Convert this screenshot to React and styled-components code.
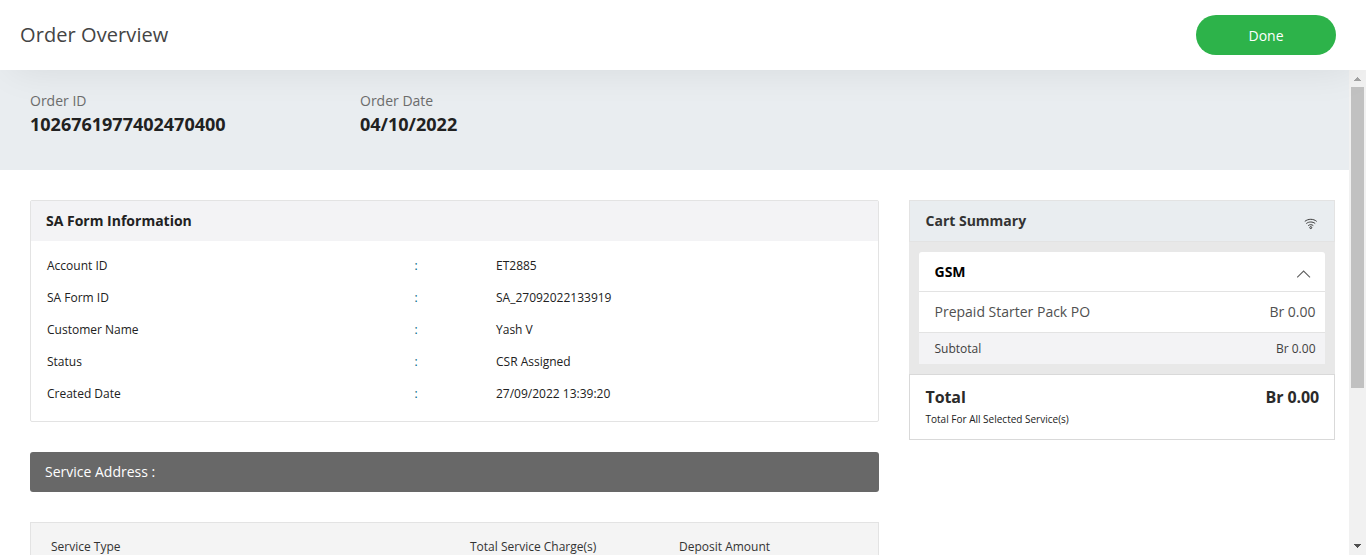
import React from "react";
import styled, { createGlobalStyle } from "styled-components";

const GlobalStyle = createGlobalStyle`
  *, *::before, *::after { box-sizing: border-box; }
  body {
    margin: 0;
    background: #fff;
    color: #212121;
    font-family: "Open Sans", "Noto Sans", sans-serif;
    font-size: 14px;
    overflow: hidden;
  }
`;

const Page = styled.div`
  display: flex;
  flex-direction: column;
  height: 555px;
  overflow: hidden;
`;

const Header = styled.header`
  position: relative;
  z-index: 1;
  flex: none;
  display: flex;
  align-items: center;
  justify-content: space-between;
  height: 70px;
  padding: 0 30px 0 20px;
  background: #fff;
  box-shadow: 0 10px 40px -12px rgba(0, 0, 0, 0.09);
`;

const Title = styled.h1`
  margin: 0;
  font-size: 20px;
  font-weight: 400;
  line-height: 30px;
  letter-spacing: 0.08px;
  color: #444;
`;

const DoneButton = styled.button`
  width: 140px;
  height: 40px;
  padding: 2px 0 0;
  border: 0;
  border-radius: 20px;
  background: #2db34a;
  color: #fff;
  font: 400 14px/20px "Open Sans", sans-serif;
`;

const Viewport = styled.div`
  flex: 1;
  min-height: 0;
  display: flex;
`;

const Content = styled.main`
  flex: 1;
  min-width: 0;
  overflow: hidden;
`;

const OrderBand = styled.section`
  display: flex;
  height: 100px;
  padding: 21px 30px 0;
  background: #e9edf0;
`;

const OrderFact = styled.div`
  width: 330px;
`;

const FactLabel = styled.div`
  font-size: 14px;
  line-height: 20px;
  color: #6c6c6c;
`;

const FactValue = styled.div`
  font-size: 18px;
  font-weight: 700;
  line-height: 26px;
  color: #212121;
`;

const Columns = styled.div`
  display: flex;
  align-items: flex-start;
  gap: 30px;
  padding: 30px 14px 0 30px;
`;

const MainColumn = styled.div`
  flex: none;
  width: 849px;
  display: flex;
  flex-direction: column;
  gap: 30px;
`;

const Panel = styled.section`
  height: 222px;
  border: 1px solid #e3e3e3;
  border-radius: 2px;
`;

const PanelHeading = styled.h2`
  margin: 0;
  height: 40px;
  padding: 0 15px;
  background: #f3f3f5;
  font-size: 14px;
  font-weight: 700;
  line-height: 40px;
`;

const Details = styled.div`
  padding: 9px 16px;
`;

const DetailRow = styled.div`
  display: grid;
  grid-template-columns: 367px 82px 1fr;
  height: 32px;
  font-size: 12px;
  line-height: 32px;
`;

const Colon = styled.span`
  padding-left: 0.5px;
  color: #00647f;
`;

const AddressBar = styled.div`
  height: 40px;
  padding: 0 15px;
  border-radius: 3px;
  background: #686868;
  color: #fff;
  font-size: 14px;
  line-height: 40px;
`;

const ServiceTable = styled.div`
  display: grid;
  grid-template-columns: 419px 209px 1fr;
  height: 60px;
  padding: 0 20px;
  border: 1px solid #e3e3e3;
  background: #f4f4f4;
  color: #333;
  font-size: 12px;
  line-height: 48px;
`;

const Cart = styled.aside`
  flex: none;
  width: 426px;
  background: #e8e8e8;
`;

const CartHeading = styled.div`
  display: flex;
  justify-content: space-between;
  height: 42px;
  padding: 0 16px 0 15.5px;
  border: 1px solid #e3e3e3;
  background: #e9edf0;
  font-size: 14px;
  font-weight: 700;
  line-height: 40px;
  color: #333;
`;

const CartGroup = styled.div`
  margin: 10px 10px 0;
  height: 112px;
  border-radius: 3px 3px 0 0;
  overflow: hidden;
  background: #fff;
`;

const CartLine = styled.div`
  display: flex;
  justify-content: space-between;
  height: ${(p) => p.$height}px;
  padding: 0 9.5px 0 15.5px;
  line-height: 39px;
  border-bottom: 1px solid #e3e3e3;
`;

const GroupLine = styled(CartLine)`
  padding-right: 14px;
  font-weight: 700;
  color: #000;
`;

const ItemLine = styled(CartLine)`
  color: #505050;
`;

const SubtotalLine = styled(CartLine)`
  border: 0;
  background: #f3f3f5;
  font-size: 12px;
  line-height: 31px;
  color: #404040;
`;

const CartTotal = styled.div`
  height: 66px;
  margin-top: 10px;
  padding: 9px 15px 0 15.5px;
  border: 1px solid #d9d9d9;
  background: #fff;
`;

const TotalLine = styled.div`
  display: flex;
  justify-content: space-between;
  font-size: 16px;
  font-weight: 700;
  letter-spacing: -0.1px;
  line-height: 26px;
  color: #2a2a2a;
`;

const TotalNote = styled.div`
  font-size: 10px;
  line-height: 18px;
`;

const Icon = styled.svg`
  flex: none;
  fill: none;
  stroke: ${(p) => p.$color};
  margin-top: ${(p) => p.$top}px;
`;

const Scrollbar = styled.div`
  flex: none;
  width: 17px;
  display: flex;
  flex-direction: column;
  align-items: center;
  background: #f1f1f1;
`;

const ScrollArrow = styled.svg`
  flex: none;
  width: 17px;
  height: 17px;
  fill: ${(p) => p.$color};
`;

const ScrollThumb = styled.div`
  width: 13px;
  height: 301px;
  margin-bottom: auto;
  background: #c1c1c1;
`;

const details = [
  ["Account ID", "ET2885"],
  ["SA Form ID", "SA_27092022133919"],
  ["Customer Name", "Yash V"],
  ["Status", "CSR Assigned"],
  ["Created Date", "27/09/2022 13:39:20"],
];

export default function App() {
  return (
    <>
      <GlobalStyle />
      <Page>
        <Header>
          <Title>Order Overview</Title>
          <DoneButton>Done</DoneButton>
        </Header>
        <Viewport>
          <Content>
            <OrderBand>
              <OrderFact>
                <FactLabel>Order ID</FactLabel>
                <FactValue>1026761977402470400</FactValue>
              </OrderFact>
              <OrderFact>
                <FactLabel>Order Date</FactLabel>
                <FactValue>04/10/2022</FactValue>
              </OrderFact>
            </OrderBand>
            <Columns>
              <MainColumn>
                <Panel>
                  <PanelHeading>SA Form Information</PanelHeading>
                  <Details>
                    {details.map(([label, value]) => (
                      <DetailRow key={label}>
                        <span>{label}</span>
                        <Colon>:</Colon>
                        <span>{value}</span>
                      </DetailRow>
                    ))}
                  </Details>
                </Panel>
                <AddressBar>Service Address :</AddressBar>
                <ServiceTable>
                  <span>Service Type</span>
                  <span>Total Service Charge(s)</span>
                  <span>Deposit Amount</span>
                </ServiceTable>
              </MainColumn>
              <Cart>
                <CartHeading>
                  <span>Cart Summary</span>
                  <Icon $top={17} $color="#3c3c3c" width="14" height="12" viewBox="0 0 14 12">
                    <path d="M.8 3.4C4.2.6 9.3.6 12.7 3.4M2.3 5.5c2.6-2 6.3-2 8.9 0M4.2 7.6c1.5-1.2 3.6-1.2 5.1 0" />
                    <circle cx="6.75" cy="9.6" r="1" />
                  </Icon>
                </CartHeading>
                <CartGroup>
                  <GroupLine $height={40}>
                    <span>GSM</span>
                    <Icon $top={17} $color="#606060" width="15" height="10" viewBox="0 0 15 10">
                      <path d="M1.2 8.3 7.6 2 14 8.3" strokeWidth="1.1" />
                    </Icon>
                  </GroupLine>
                  <ItemLine $height={41}>
                    <span>Prepaid Starter Pack PO</span>
                    <span>Br 0.00</span>
                  </ItemLine>
                  <SubtotalLine $height={31}>
                    <span>Subtotal</span>
                    <span>Br 0.00</span>
                  </SubtotalLine>
                </CartGroup>
                <CartTotal>
                  <TotalLine>
                    <span>Total</span>
                    <span>Br 0.00</span>
                  </TotalLine>
                  <TotalNote>Total For All Selected Service(s)</TotalNote>
                </CartTotal>
              </Cart>
            </Columns>
          </Content>
          <Scrollbar>
            <ScrollArrow $color="#a3a3a3" viewBox="0 0 17 17" shapeRendering="crispEdges">
              <path d="M8 7h1v1h1v1h1v1h1v1H5v-1h1V9h1V8h1z" />
            </ScrollArrow>
            <ScrollThumb />
            <ScrollArrow $color="#505050" viewBox="0 0 17 17" shapeRendering="crispEdges">
              <path d="M5 6h7v1h-1v1h-1v1H9v1H8V9H7V8H6V7H5z" />
            </ScrollArrow>
          </Scrollbar>
        </Viewport>
      </Page>
    </>
  );
}
